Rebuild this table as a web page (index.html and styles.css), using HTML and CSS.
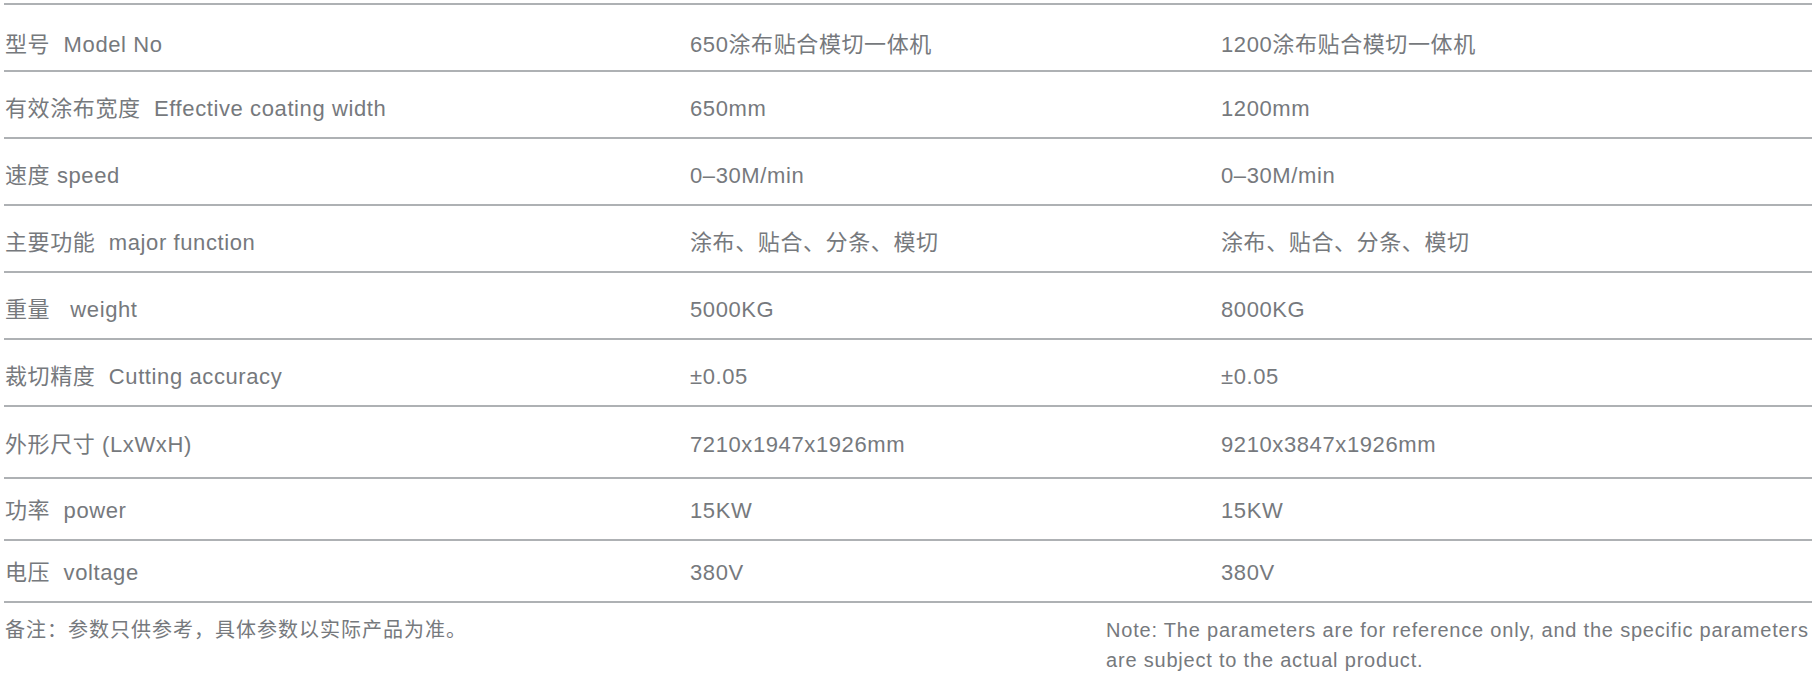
FILE: index.html
```html
<!DOCTYPE html>
<html lang="zh-CN">
<head>
<meta charset="utf-8">
<title>参数</title>
<link rel="stylesheet" href="styles.css">
</head>
<body>
<div class="page">
  <div class="specs">
    <div class="row row-first">
      <div class="cell">型号&nbsp;&nbsp;Model No</div>
      <div class="cell">650涂布贴合模切一体机</div>
      <div class="cell">1200涂布贴合模切一体机</div>
    </div>
    <div class="row">
      <div class="cell">有效涂布宽度&nbsp;&nbsp;Effective coating width</div>
      <div class="cell">650mm</div>
      <div class="cell">1200mm</div>
    </div>
    <div class="row">
      <div class="cell">速度 speed</div>
      <div class="cell">0–30M/min</div>
      <div class="cell">0–30M/min</div>
    </div>
    <div class="row">
      <div class="cell">主要功能&nbsp;&nbsp;major function</div>
      <div class="cell">涂布、贴合、分条、模切</div>
      <div class="cell">涂布、贴合、分条、模切</div>
    </div>
    <div class="row">
      <div class="cell">重量&nbsp;&nbsp;&nbsp;weight</div>
      <div class="cell">5000KG</div>
      <div class="cell">8000KG</div>
    </div>
    <div class="row">
      <div class="cell">裁切精度&nbsp;&nbsp;Cutting accuracy</div>
      <div class="cell">±0.05</div>
      <div class="cell">±0.05</div>
    </div>
    <div class="row row-tall">
      <div class="cell">外形尺寸 (LxWxH)</div>
      <div class="cell">7210x1947x1926mm</div>
      <div class="cell">9210x3847x1926mm</div>
    </div>
    <div class="row row-short">
      <div class="cell">功率&nbsp;&nbsp;power</div>
      <div class="cell">15KW</div>
      <div class="cell">15KW</div>
    </div>
    <div class="row row-short">
      <div class="cell">电压&nbsp;&nbsp;voltage</div>
      <div class="cell">380V</div>
      <div class="cell">380V</div>
    </div>
  </div>
  <div class="notes">
    <p class="note-cn">备注：参数只供参考，具体参数以实际产品为准。</p>
    <p class="note-en">Note: The parameters are for reference only, and the specific parameters are subject to the actual product.</p>
  </div>
</div>
</body>
</html>
```
FILE: styles.css
```css
html, body {
  margin: 0;
  padding: 0;
  background: #ffffff;
}

body {
  font-family: "Liberation Sans", "Noto Sans CJK SC", sans-serif;
  color: #76797d;
}

.page {
  padding: 3px 5px 0 4px;
}

.specs {
  border-top: 2px solid #aeb1b4;
}

.row {
  display: grid;
  grid-template-columns: 685px 531px 1fr;
  align-items: center;
  height: 67px;
  box-sizing: border-box;
  padding-top: 8px;
  border-bottom: 2px solid #aeb1b4;
}

.row-first {
  padding-top: 14px;
}

.row-tall {
  height: 72px;
  padding-top: 6px;
}

.row-short {
  height: 62px;
  padding-top: 4px;
}

.cell {
  font-size: 22px;
  line-height: 30px;
  letter-spacing: 0.6px;
  padding-left: 1px;
  white-space: nowrap;
}

.notes {
  display: flex;
  justify-content: space-between;
  padding-top: 12px;
}

.notes p {
  margin: 0;
  font-size: 20px;
  line-height: 30px;
}

.note-cn {
  padding-left: 1px;
  letter-spacing: 1px;
}

.note-en {
  width: 706px;
  letter-spacing: 0.8px;
}
```
